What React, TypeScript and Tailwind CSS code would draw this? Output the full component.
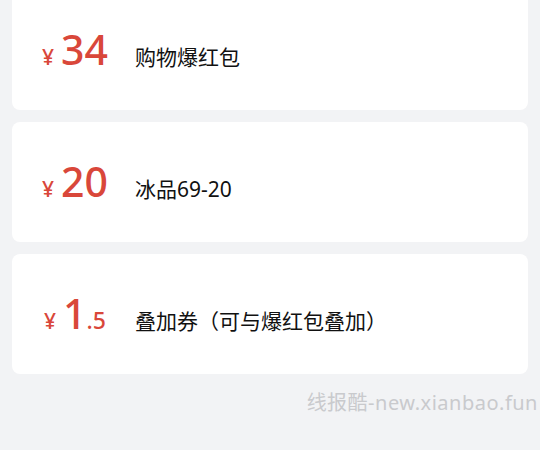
import React from "react";

type Coupon = { whole: string; frac?: string; title: string };

const coupons: Coupon[] = [
  { whole: "34", title: "购物爆红包" },
  { whole: "20", title: "冰品69-20" },
  { whole: "1", frac: ".5", title: "叠加券（可与爆红包叠加）" },
];

const font = { fontFamily: '"Noto Sans", "Noto Sans CJK SC", sans-serif' };

export default function App() {
  return (
    <div className="h-[450px] w-[540px] overflow-hidden bg-[#f2f3f5]" style={font}>
      <div className="-mt-[10px] flex flex-col gap-3 px-3">
        {coupons.map((c) => (
          <div key={c.title} className="flex h-[120px] items-center rounded-lg bg-white">
            <div className="mt-[3px] flex items-baseline">
              {/* price */}
              <div className="flex w-[114px] items-baseline justify-center pl-3 text-[#d9473a]">
                <span className="mr-[7px] text-[21px] font-medium">¥</span>
                <span className="text-[41px] font-medium leading-none">{c.whole}</span>
                {c.frac && <span className="text-[23px] font-medium">{c.frac}</span>}
              </div>
              <div className="ml-[9px] text-[21px] text-[#111]">{c.title}</div>
            </div>
          </div>
        ))}
      </div>
      <div className="mt-[14px] pr-[2px] text-right text-[20px] tracking-[0.5px] text-[#c9cacd]">
        线报酷-new.xianbao.fun
      </div>
    </div>
  );
}
